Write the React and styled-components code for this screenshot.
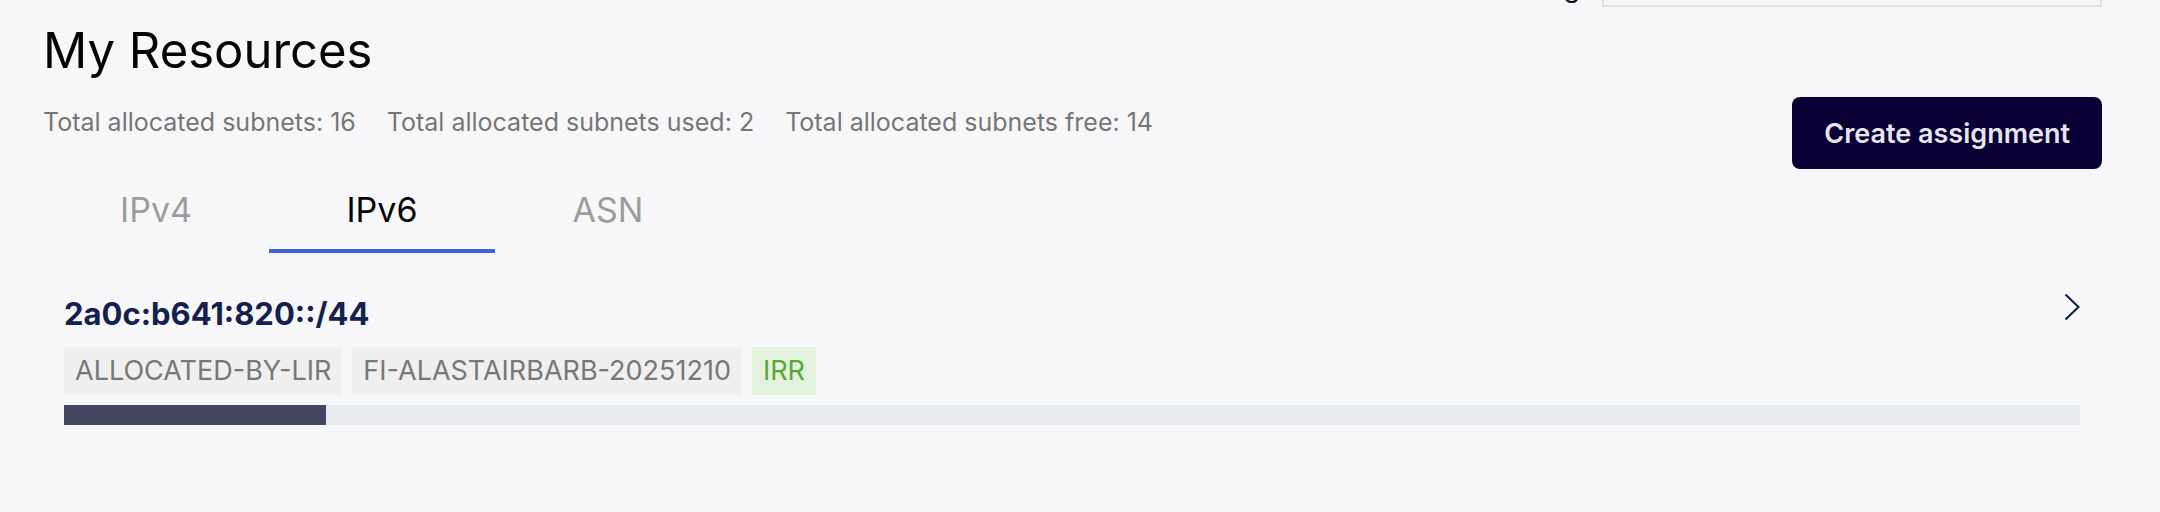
import React from "react";
import styled, { createGlobalStyle } from "styled-components";

const GlobalStyle = createGlobalStyle`
  body {
    margin: 0;
    background: #f7f7f9;
    font-family: Inter, "Noto Sans", sans-serif;
  }
`;

// Top filter strip, mostly scrolled out of view
const TopBar = styled.div`
  display: flex;
  justify-content: flex-end;
  align-items: flex-end;
  gap: 22px;
  height: 7px;
  overflow: hidden;
  padding-right: 58px;
`;

const FilterLabel = styled.span`
  font-size: 27px;
  line-height: 27px;
  color: #111;
  margin-bottom: 6px;
`;

const FilterInput = styled.div`
  width: 500px;
  height: 60px;
  box-sizing: border-box;
  border: 2px solid #e0e0e3;
  background: #f7f7f9;
`;

const Page = styled.div`
  padding: 0 58px 40px 43px;
`;

const Title = styled.h1`
  margin: 13px 0 0;
  font-size: 49px;
  line-height: 61px;
  font-weight: 400;
  color: #050505;
`;

const Toolbar = styled.div`
  display: flex;
  justify-content: space-between;
  align-items: flex-start;
  margin-top: 16px;
`;

const Stats = styled.div`
  display: flex;
  gap: 31px;
  margin-top: 11px;
  font-size: 25px;
  line-height: 28px;
  color: #767676;
`;

const Button = styled.button`
  height: 72px;
  padding: 0 32px;
  border: none;
  border-radius: 8px;
  background: #0a0035;
  color: #e6e4ee;
  font-family: inherit;
  font-size: 27px;
  font-weight: 600;
  cursor: pointer;
`;

const Tabs = styled.div`
  display: flex;
  margin-top: 20px;
`;

const Tab = styled.div`
  width: 226px;
  text-align: center;
  font-size: 34px;
  line-height: 41px;
  padding-bottom: 19px;
  color: ${(p) => (p.$active ? "#050505" : "#9c9c9c")};
  border-bottom: 4px solid ${(p) => (p.$active ? "#3a63dc" : "transparent")};
  cursor: pointer;
`;

const Item = styled.div`
  padding: 43px 22px 21px 21px;
`;

const ItemHead = styled.div`
  display: flex;
  justify-content: space-between;
  align-items: flex-start;
`;

const Prefix = styled.div`
  font-size: 31px;
  line-height: 36px;
  font-weight: 700;
  color: #15204c;
`;

const Chevron = styled.svg`
  margin-top: -3px;
`;

const Tags = styled.div`
  display: flex;
  gap: 10px;
  margin-top: 15px;
`;

const Tag = styled.span`
  padding: 8px 11px;
  font-size: 27px;
  line-height: 32px;
  background: ${(p) => (p.$green ? "#e3f2dc" : "#efefef")};
  color: ${(p) => (p.$green ? "#56a83a" : "#777777")};
`;

const Track = styled.div`
  height: 20px;
  margin-top: 10px;
  background: #e8ebee;
`;

const Fill = styled.div`
  height: 100%;
  background: #44455e;
`;

const used = 2;
const total = 16;

export default function App() {
  return (
    <>
      <GlobalStyle />
      <TopBar>
        <FilterLabel>Filtering</FilterLabel>
        <FilterInput />
      </TopBar>
      <Page>
        <Title>My Resources</Title>
        <Toolbar>
          <Stats>
            <span>Total allocated subnets: {total}</span>
            <span>Total allocated subnets used: {used}</span>
            <span>Total allocated subnets free: {total - used}</span>
          </Stats>
          <Button>Create assignment</Button>
        </Toolbar>
        <Tabs>
          <Tab>IPv4</Tab>
          <Tab $active>IPv6</Tab>
          <Tab>ASN</Tab>
        </Tabs>
        <Item>
          <ItemHead>
            <Prefix>2a0c:b641:820::/44</Prefix>
            <Chevron width="16" height="28" viewBox="0 0 16 28" fill="none">
              <path d="M1.5 1.5 L14.5 14 L1.5 26.5" stroke="#15204c" strokeWidth="2.2" />
            </Chevron>
          </ItemHead>
          <Tags>
            <Tag>ALLOCATED-BY-LIR</Tag>
            <Tag>FI-ALASTAIRBARB-20251210</Tag>
            <Tag $green>IRR</Tag>
          </Tags>
          <Track>
            <Fill style={{ width: `${(used / total) * 100 + 0.5}%` }} />
          </Track>
        </Item>
      </Page>
    </>
  );
}
